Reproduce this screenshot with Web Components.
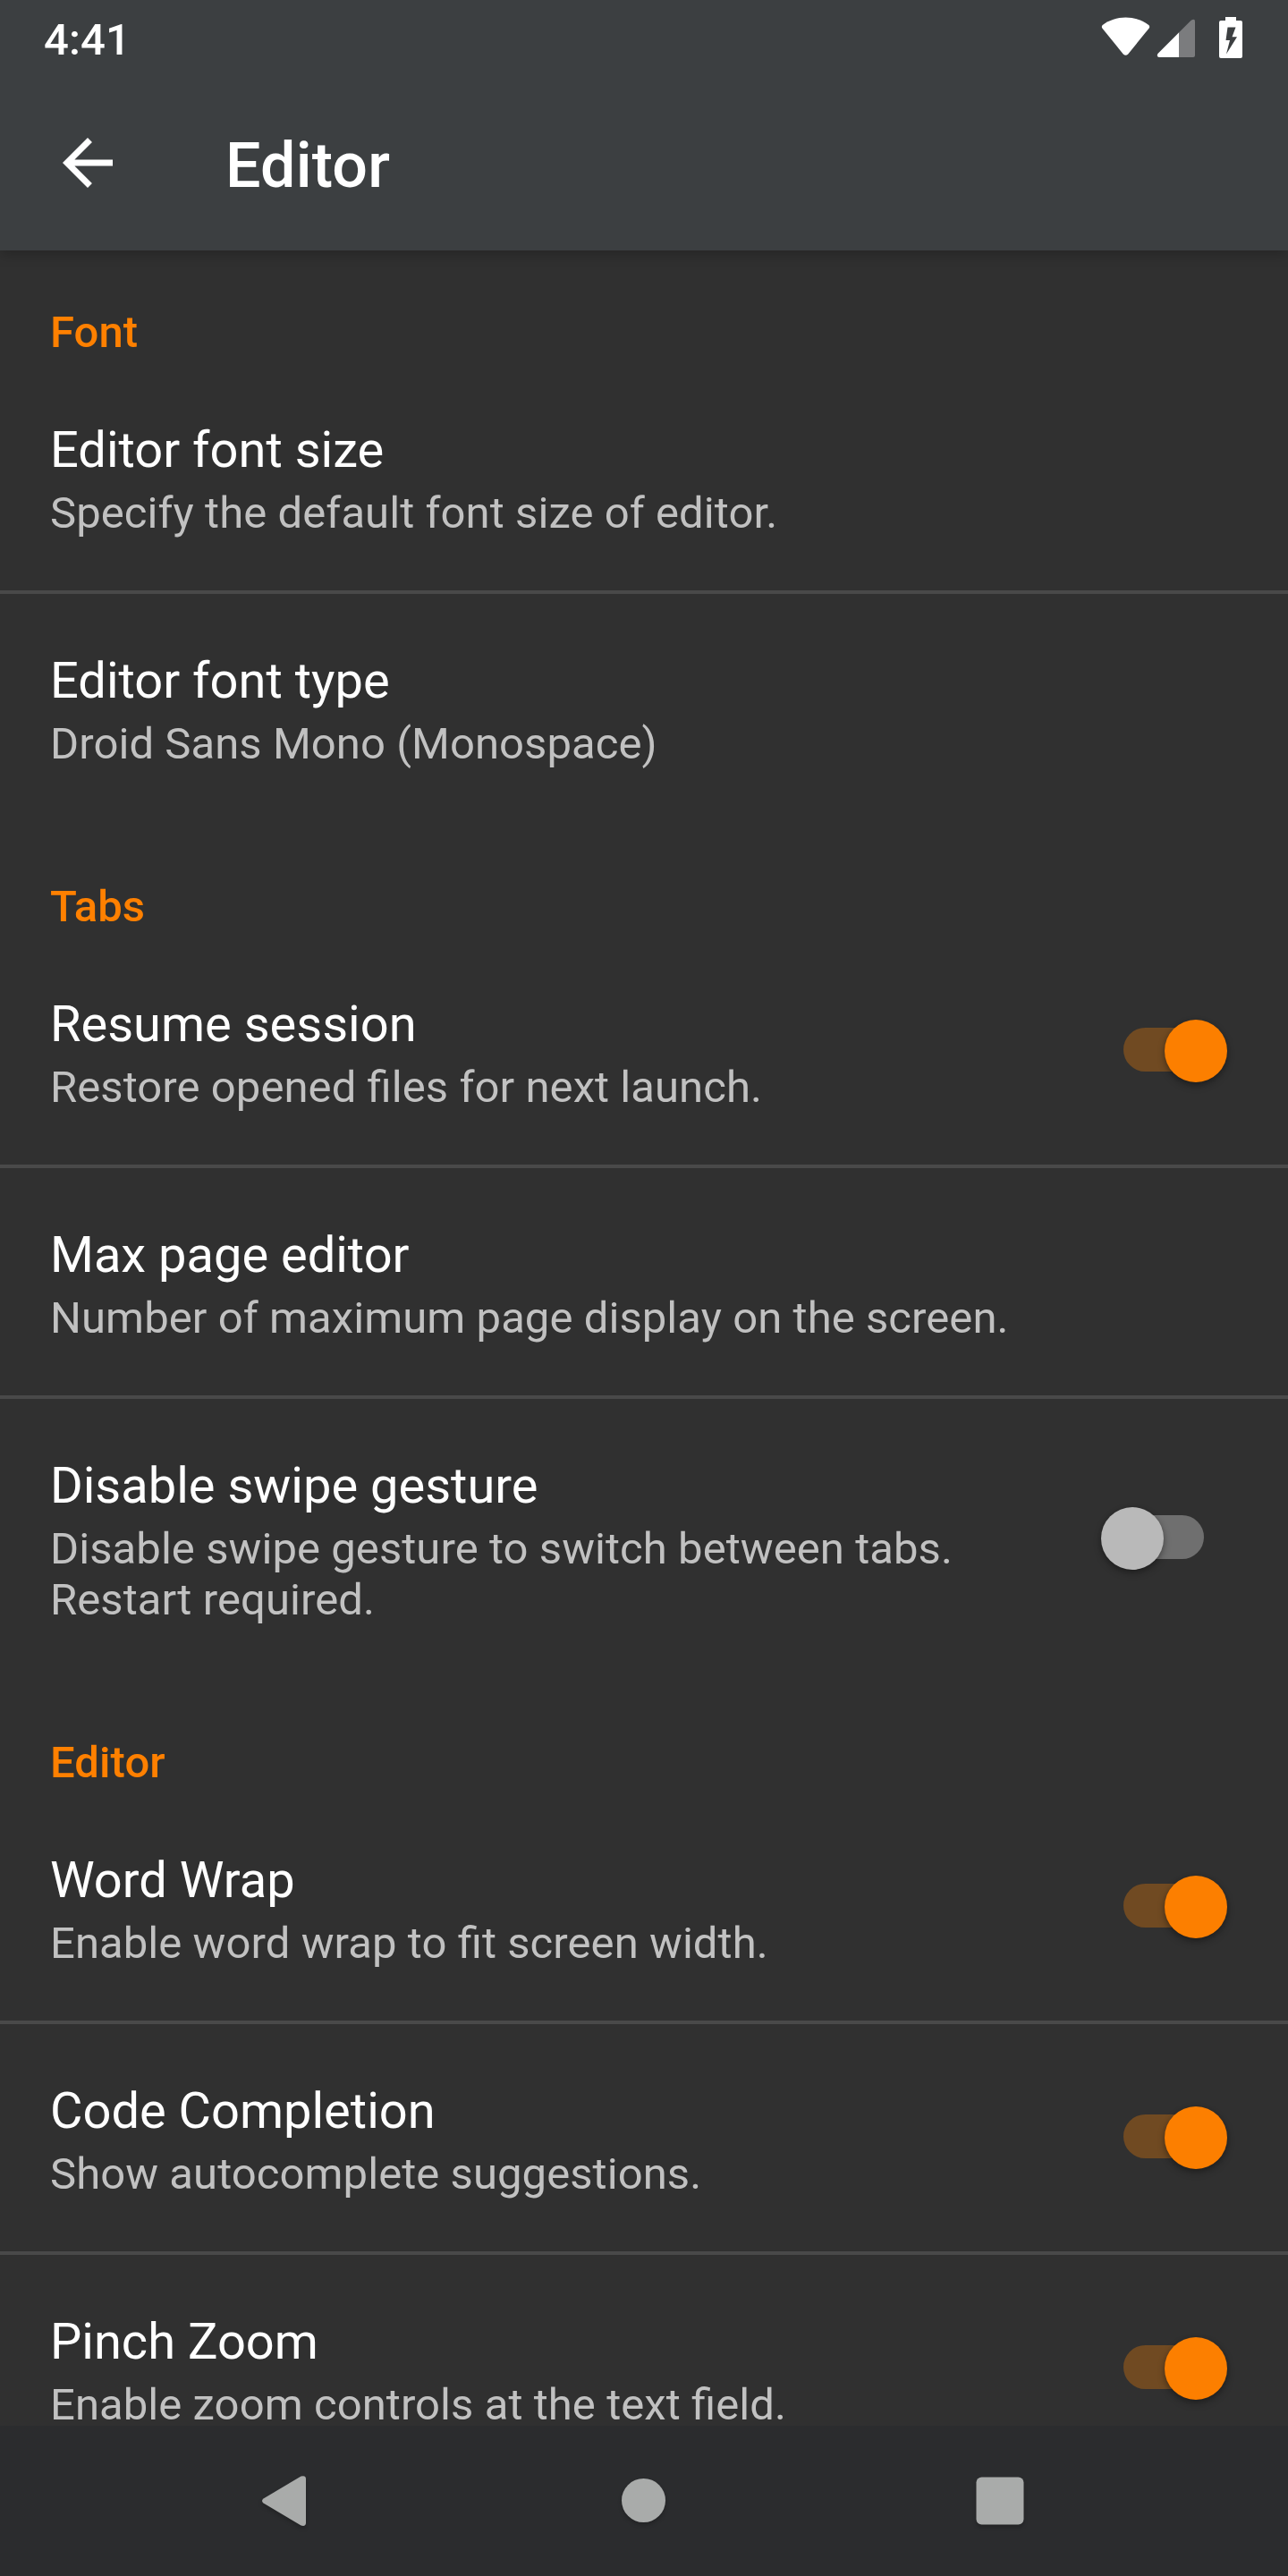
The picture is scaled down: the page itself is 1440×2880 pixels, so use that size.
<!DOCTYPE html>
<html lang="en">
<head>
<meta charset="utf-8">
<title>Editor</title>
<style>
html,body{margin:0;padding:0;background:#303030}
body{font-family:Roboto,"Liberation Sans",sans-serif;width:1440px;height:2880px;overflow:hidden}
</style>
</head>
<body>
<settings-screen>
  <status-bar slot="top">4:41</status-bar>
  <app-bar slot="top">Editor</app-bar>
  <pref-group label="Font">
    <pref-row><span slot="title">Editor font size</span>Specify the default font size of editor.</pref-row>
    <pref-row><span slot="title">Editor font type</span>Droid Sans Mono (Monospace)</pref-row>
  </pref-group>
  <pref-group label="Tabs">
    <pref-row><span slot="title">Resume session</span>Restore opened files for next launch.<toggle-switch slot="widget" on></toggle-switch></pref-row>
    <pref-row><span slot="title">Max page editor</span>Number of maximum page display on the screen.</pref-row>
    <pref-row><span slot="title">Disable swipe gesture</span>Disable swipe gesture to switch between tabs. Restart required.<toggle-switch slot="widget"></toggle-switch></pref-row>
  </pref-group>
  <pref-group label="Editor">
    <pref-row><span slot="title">Word Wrap</span>Enable word wrap to fit screen width.<toggle-switch slot="widget" on></toggle-switch></pref-row>
    <pref-row><span slot="title">Code Completion</span>Show autocomplete suggestions.<toggle-switch slot="widget" on></toggle-switch></pref-row>
    <pref-row><span slot="title">Pinch Zoom</span>Enable zoom controls at the text field.<toggle-switch slot="widget" on></toggle-switch></pref-row>
  </pref-group>
  <nav-bar slot="bottom"></nav-bar>
</settings-screen>
<script>
const define = (name, html) => customElements.define(name, class extends HTMLElement {
  constructor() {
    super();
    this.attachShadow({ mode: 'open' }).innerHTML = html;
  }
  connectedCallback() {
    const label = this.shadowRoot.querySelector('[data-label]');
    if (label) label.textContent = this.getAttribute('label');
  }
});

define('settings-screen', `
<style>
:host{display:flex;flex-direction:column;width:1440px;height:2880px;background:#303030;overflow:hidden}
header{flex:none;height:280px;background:#3c3f41;box-shadow:0 4px 14px rgba(0,0,0,.23);z-index:1}
main{flex:1;min-height:0;overflow:hidden;display:flex;flex-direction:column}
::slotted(pref-group){flex:none}
main ::slotted(pref-group:first-of-type){margin-top:-4px}
</style>
<header><slot name="top"></slot></header>
<main><slot></slot></main>
<slot name="bottom"></slot>`);

define('status-bar', `
<style>
:host{display:flex;justify-content:space-between;height:84px;color:#fff;font-size:49px;line-height:57px;font-weight:500}
.t{padding:16px 0 0 49px;letter-spacing:.15px}
svg{display:block}
</style>
<div class="t"><slot></slot></div>
<svg width="240" height="84" viewBox="0 0 240 84">
  <path d="M58.5 19.5C68 19.500 77 22.500 84.300 28Q86 29.700 84.500 31.700L61 60.700Q58.500 63 56 60.700L32.500 31.700Q31 29.700 32.700 28C40 22.500 49 19.500 58.500 19.500Z" fill="#fff"/>
  <path d="M131.600 22.800Q136 20 136 24V62Q136 64 134 64H96Q92.500 63 94.500 59.900Z" fill="#7b7c7e"/>
  <path d="M118 36.400V64H96Q92.500 63 94.500 59.900Z" fill="#fff"/>
  <path fill-rule="evenodd" d="M170 19H182V23H187Q189 23 189 25V63Q189 65 187 65H165Q163 65 163 63V25Q163 23 165 23H170ZM172.500 30.500L170.500 45H175L171 60.500L183 41.300H177.500L181.500 30.500Z" fill="#fff"/>
</svg>`);

define('app-bar', `
<style>
:host{display:flex;align-items:center;height:196px;color:#fff;font-size:70px;line-height:82px;font-weight:500}
svg{display:block;margin-left:70px;margin-right:126px;width:56px;height:56px;flex:none}
.t{padding-top:6px;letter-spacing:.15px}
</style>
<svg viewBox="4 4 16 16"><path fill="#fff" d="M20 11H7.830l5.590-5.590L12 4l-8 8 8 8 1.410-1.410L7.830 13H20v-2z"/></svg>
<div class="t"><slot></slot></div>`);

define('pref-group', `
<style>
:host{display:block}
h2{margin:0;height:59px;padding:67px 56px 0;color:#ff8000;font-size:49px;line-height:57px;font-weight:500;letter-spacing:.08px}
::slotted(pref-row){border-top:4px solid #494949}
::slotted(pref-row:first-of-type){border-top-color:transparent}
</style>
<h2 data-label></h2>
<slot></slot>`);

define('pref-row', `
<style>
:host{display:flex;align-items:center;justify-content:space-between}
.text{width:1144px;padding:64px 0 58px 56px}
.title{color:#fff;font-size:56px;line-height:66px;margin-bottom:9px}
.sum{color:#c1c1c1;font-size:49px;line-height:57px;letter-spacing:.07px;font-feature-settings:"liga" 1}
</style>
<div class="text"><div class="title"><slot name="title"></slot></div><div class="sum"><slot></slot></div></div>
<slot name="widget"></slot>`);

define('toggle-switch', `
<style>
:host{display:grid;flex:none;width:115px;height:70px;margin-right:94px;align-items:center}
:host([on]){width:116px;margin-right:68px}
i{grid-area:1/1;display:block}
.track{width:101px;height:49px;border-radius:25px;background:#6f6f6f;justify-self:end;margin-bottom:3px}
.thumb{width:70px;height:70px;border-radius:50%;background:#b9b9b9;box-shadow:0 4px 8px rgba(0,0,0,.3),0 1px 4px rgba(0,0,0,.15)}
:host([on]) .track{background:#704a22;justify-self:start}
:host([on]) .thumb{background:#fc7f00;justify-self:end}
</style>
<i class="track"></i><i class="thumb"></i>`);

define('nav-bar', `
<style>
:host{display:block;flex:none;height:168px;background:#2b2c2e}
svg{display:block;filter:drop-shadow(0 3px 2px rgba(0,0,0,.2))}
</style>
<svg width="1440" height="168" viewBox="0 0 1440 168" fill="#a9abaa">
  <path d="M294.500 81.500L336.500 56.500Q342 55 342 59.500V108.500Q342 113 336.500 111.500L294.500 86.500Q291.500 84 294.500 81.500Z"/>
  <circle cx="719.500" cy="83.500" r="24.500"/>
  <rect x="1091.500" y="57.500" width="53" height="53" rx="6"/>
</svg>`);
</script>
</body>
</html>
